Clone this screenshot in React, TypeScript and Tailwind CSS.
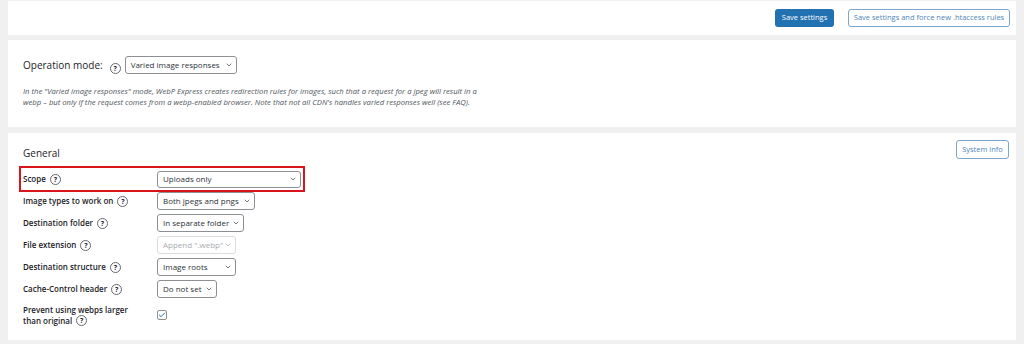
import { ChevronDown, Check } from 'lucide-react';

const font = { fontFamily: '"Open Sans", "Noto Sans", sans-serif' };

function Help() {
  return (
    <span className="inline-flex items-center justify-center w-[11px] h-[11px] rounded-full border border-[#646970] text-[7px] font-bold leading-none text-[#1d2327] shrink-0">
      ?
    </span>
  );
}

function Select({
  value,
  width,
  disabled = false,
  tall = 18,
}: {
  value: string;
  width: string;
  disabled?: boolean;
  tall?: number;
}) {
  return (
    <div
      className={`${width} ${tall === 17 ? 'h-[17px]' : 'h-[18px]'} flex items-center justify-between gap-[1px] pl-[5px] pr-[3px] rounded-[3px] border bg-white text-[8px] ${
        disabled ? 'border-[#dcdcde] text-[#a7aaad]' : 'border-[#8c8f94] text-[#2c3338]'
      }`}
    >
      <span className="whitespace-nowrap leading-none shrink-0">{value}</span>
      <ChevronDown size={8} strokeWidth={2} className={`shrink-0 ${disabled ? 'text-[#a7aaad]' : 'text-[#2c3338]'}`} />
    </div>
  );
}

function Row({ label, children }: { label: string; children: React.ReactNode }) {
  return (
    <div className="flex items-center h-[22px]">
      <div className="w-[134px] flex items-center gap-[4px] text-[8px] font-semibold text-[#1d2327]">
        <span className="whitespace-nowrap">{label}</span>
        <Help />
      </div>
      {children}
    </div>
  );
}

export default function App() {
  return (
    <div style={font} className="w-[1024px] h-[344px] bg-[#f0f0f1] px-[8px] pt-[1px] flex flex-col overflow-hidden">
      {/* Top bar with save buttons */}
      <div className="w-[1008px] h-[34px] bg-white flex items-center justify-end gap-[14px] pr-[6px] shrink-0">
        <button className="h-[18px] w-[59px] rounded-[3px] bg-[#2271b1] text-white text-[7.5px] leading-none">
          Save settings
        </button>
        <button className="h-[18px] w-[162px] rounded-[3px] border border-[#7ea6cc] bg-white text-[#4f86bb] text-[7.5px] leading-none">
          Save settings and force new .htaccess rules
        </button>
      </div>

      {/* Operation mode */}
      <div className="w-[1008px] h-[87px] mt-[5px] bg-white pl-[15px] pt-[16px] shrink-0">
        <div className="flex items-center h-[18px]">
          <span className="text-[10px] font-medium text-[#1d2327]">Operation mode:</span>
          <span className="ml-[7px] mr-[4px]">
            <Help />
          </span>
          <Select value="Varied image responses" width="w-[112px]" />
        </div>
        <p className="mt-[12px] text-[7.7px] italic leading-[11px] text-[#50575e] whitespace-nowrap">
          In the "Varied image responses" mode, WebP Express creates redirection rules for images, such that a request for a jpeg will result in a
          <br />
          webp – but only if the request comes from a webp-enabled browser. Note that not all CDN's handles varied responses well (see FAQ).
        </p>
      </div>

      {/* General */}
      <div className="w-[1008px] h-[207px] mt-[6px] bg-white pl-[15px] pr-[7px] pt-[7px] shrink-0">
        <div className="flex justify-between items-start h-[28px]">
          <h2 className="mt-[8px] text-[10px] font-medium text-[#1d2327] leading-none">General</h2>
          <button className="h-[19px] w-[53px] rounded-[3px] border border-[#7ea6cc] bg-white text-[#4f86bb] text-[7.5px] leading-none">
            System info
          </button>
        </div>

        <div className="relative">
          <div className="absolute -left-[4px] -top-[2px] w-[286px] h-[26px] border-2 border-[#d9151b] pointer-events-none" />
          <Row label="Scope">
            <Select value="Uploads only" width="w-[144px]" tall={17} />
          </Row>
        </div>
        <Row label="Image types to work on">
          <Select value="Both jpegs and pngs" width="w-[98px]" />
        </Row>
        <Row label="Destination folder">
          <Select value="In separate folder" width="w-[87px]" />
        </Row>
        <Row label="File extension">
          <Select value={'Append ".webp"'} width="w-[79px]" disabled />
        </Row>
        <Row label="Destination structure">
          <Select value="Image roots" width="w-[79px]" />
        </Row>
        <Row label="Cache-Control header">
          <Select value="Do not set" width="w-[60px]" />
        </Row>
        <div className="flex items-center h-[30px]">
          <div className="w-[134px] text-[8px] font-semibold text-[#1d2327] leading-[11px]">
            Prevent using webps larger
            <br />
            <span className="inline-flex items-center gap-[4px]">
              than original <Help />
            </span>
          </div>
          <div className="w-[10px] h-[10px] rounded-[2px] border border-[#8c8f94] bg-white flex items-center justify-center">
            <Check size={8} strokeWidth={3} className="text-[#2271b1]" />
          </div>
        </div>
      </div>
    </div>
  );
}
